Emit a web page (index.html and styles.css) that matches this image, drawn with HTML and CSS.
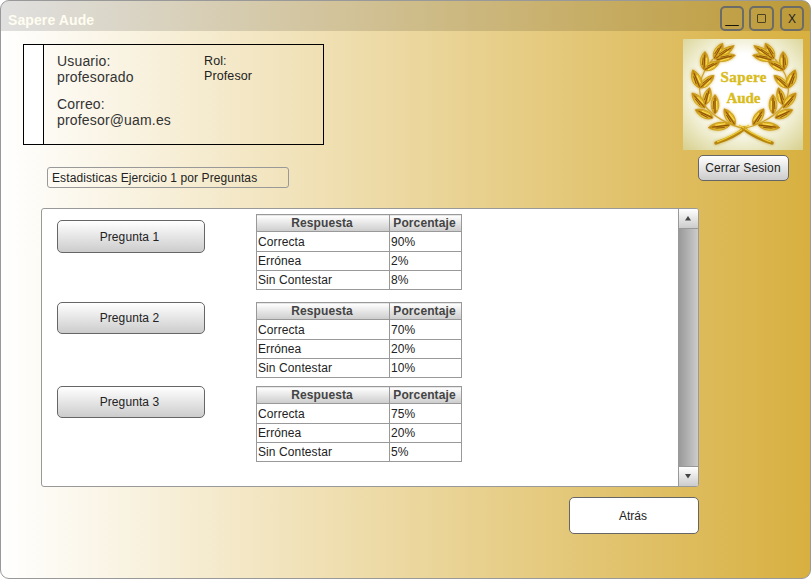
FILE: index.html
```
<!DOCTYPE html>
<html lang="es">
<head>
<meta charset="utf-8">
<title>Sapere Aude</title>
<link rel="stylesheet" href="styles.css">
</head>
<body>
<div class="window">
  <header class="titlebar">
    <h1>Sapere Aude</h1>
    <div class="controls">
      <button class="control minimize">__</button>
      <button class="control maximize"><span class="square"></span></button>
      <button class="control close">X</button>
    </div>
  </header>
  <div class="body">
    <main class="main">
      <section class="user-card">
        <div class="strip"></div>
        <div class="account">
          <p>Usuario:<br>profesorado</p>
          <p>Correo:<br>profesor@uam.es</p>
        </div>
        <p class="role">Rol:<br>Profesor</p>
      </section>
      <div class="caption">Estadisticas Ejercicio 1 por Preguntas</div>
      <section class="panel">
        <div class="questions">
          <div class="question first">
            <button class="btn">Pregunta 1</button>
            <table>
              <tr><th>Respuesta</th><th>Porcentaje</th></tr>
              <tr><td>Correcta</td><td>90%</td></tr>
              <tr><td>Errónea</td><td>2%</td></tr>
              <tr><td>Sin Contestar</td><td>8%</td></tr>
            </table>
          </div>
          <div class="question second">
            <button class="btn">Pregunta 2</button>
            <table>
              <tr><th>Respuesta</th><th>Porcentaje</th></tr>
              <tr><td>Correcta</td><td>70%</td></tr>
              <tr><td>Errónea</td><td>20%</td></tr>
              <tr><td>Sin Contestar</td><td>10%</td></tr>
            </table>
          </div>
          <div class="question">
            <button class="btn">Pregunta 3</button>
            <table>
              <tr><th>Respuesta</th><th>Porcentaje</th></tr>
              <tr><td>Correcta</td><td>75%</td></tr>
              <tr><td>Errónea</td><td>20%</td></tr>
              <tr><td>Sin Contestar</td><td>5%</td></tr>
            </table>
          </div>
        </div>
        <div class="scrollbar">
          <div class="arrow up"><svg width="6" height="5"><path d="M3 0L6 4.500H0z" fill="#444"/></svg></div>
          <div class="track"></div>
          <div class="arrow down"><svg width="6" height="5"><path d="M0 0H6L3 4.500z" fill="#444"/></svg></div>
        </div>
      </section>
      <button class="back">Atrás</button>
    </main>
    <aside class="side">
      <svg class="logo" width="120" height="111" viewBox="0 0 120 111">
        <defs>
          <radialGradient id="glow" cx=".5" cy=".46" r=".72">
            <stop offset=".45" stop-color="#fff"/>
            <stop offset=".7" stop-color="#edebca"/>
            <stop offset="1" stop-color="#d8d191"/>
          </radialGradient>
          <linearGradient id="gold">
            <stop offset="0" stop-color="#f3d545"/>
            <stop offset=".5" stop-color="#c08510"/>
            <stop offset="1" stop-color="#ecc634"/>
          </linearGradient>
          <filter id="soft" x="-20%" y="-20%" width="140%" height="140%"><feGaussianBlur stdDeviation="1.8"/></filter>
          <g id="leaf">
            <path d="M0 0C-6.500 -5 -5.500 -14 0 -19.500C5.500 -14 6.500 -5 0 0z" fill="url(#gold)" stroke="#c4930f" stroke-width=".8"/>
            <path d="M0 -1V-16M-2.200 -5L-1.600 -13" stroke="#7d4206" stroke-width=".8" fill="none"/>
            <path d="M2.200 -4L1.800 -13" stroke="#ffe65c" stroke-width="1.100"/>
          </g>
          <g id="branch">
            <path d="M33 104Q52 98 62 89" fill="none" stroke="#b7850e" stroke-width="3.400" stroke-linecap="round"/>
            <path d="M34 103Q50 97 66 86" fill="none" stroke="#edcc35" stroke-width="1.300"/>
            <path d="M62 90Q35 83 22 67Q8 46 30 20" fill="none" stroke="#d0a52a" stroke-width="1.200"/>
            <use href="#leaf" transform="translate(31 20) rotate(29) scale(.85 .92)"/>
            <use href="#leaf" transform="translate(32 20) rotate(55) scale(.75 1.2)"/>
            <use href="#leaf" transform="translate(33 21) rotate(76) scale(.75 1.02)"/>
            <use href="#leaf" transform="translate(21 31) rotate(3) scale(.9 .95)"/>
            <use href="#leaf" transform="translate(21 31) rotate(62) scale(.8 .9)"/>
            <use href="#leaf" transform="translate(17 49) rotate(-22) scale(.95 1)"/>
            <use href="#leaf" transform="translate(17 49) rotate(48) scale(.8 .97)"/>
            <use href="#leaf" transform="translate(22 69) rotate(-41) scale(.85 1.02)"/>
            <use href="#leaf" transform="translate(22 66) rotate(15) scale(.85 .92)"/>
            <use href="#leaf" transform="translate(30 79) rotate(-65) scale(.85 1)"/>
            <use href="#leaf" transform="translate(32 75) rotate(0) scale(.85 1)"/>
            <use href="#leaf" transform="translate(47 86) rotate(-97) scale(.85 1.12)"/>
            <use href="#leaf" transform="translate(52 86) rotate(-34) scale(.9 1)"/>
          </g>
        </defs>
        <rect width="120" height="111" fill="url(#glow)"/>
        <g filter="url(#soft)" opacity=".8">
          <use href="#branch"/>
          <use href="#branch" transform="translate(122 0) scale(-1 1)"/>
        </g>
        <use href="#branch"/>
        <use href="#branch" transform="translate(122 0) scale(-1 1)"/>
        <text x="60.500" y="43" textLength="46">Sapere</text>
        <text x="60.500" y="64" textLength="34">Aude</text>
      </svg>
      <button class="btn logout">Cerrar Sesion</button>
    </aside>
  </div>
</div>
</body>
</html>
```
FILE: styles.css
```
* { box-sizing: border-box; }

body {
  margin: 0;
  background: #fff;
  font: 12px/14px "Liberation Sans", Arial, sans-serif;
  color: #222;
}

button {
  font: inherit;
  color: inherit;
  padding: 0;
  margin: 0;
}

p { margin: 0; }

.window {
  width: 811px;
  height: 579px;
  border: 1px solid #999;
  border-radius: 9px;
  overflow: hidden;
  background: linear-gradient(90deg, #fff, #d8b040);
}

.titlebar {
  height: 30px;
  display: flex;
  justify-content: space-between;
  padding: 5px 6px 0;
  background: rgba(0, 0, 0, .12);
}

.titlebar h1 {
  margin: 6px 0 0 1px;
  font-size: 14px;
  line-height: 16px;
  letter-spacing: .1px;
  color: #fffdf0;
}

.controls { display: flex; gap: 5px; }

.control {
  width: 24px;
  height: 25px;
  border: 2px solid #6b6b68;
  border-radius: 5px;
  background: transparent;
  display: flex;
  align-items: center;
  justify-content: center;
}

.maximize { width: 25px; }
.close { margin-left: 1px; }
.minimize { color: #000; }

.square {
  width: 9px;
  height: 9px;
  border: 1px solid #4b431f;
  border-radius: 1px;
}

.body {
  display: flex;
  padding-left: 22px;
}

.main {
  width: 676px;
  padding-top: 13px;
  display: flex;
  flex-direction: column;
}

.user-card {
  width: 301px;
  height: 101px;
  border: 1px solid #000;
  display: flex;
  font-size: 14px;
  line-height: 16px;
  color: #333;
}

.strip {
  width: 20px;
  background: #fff;
  border-right: 1px solid #000;
}

.account {
  width: 147px;
  padding: 8px 0 0 13px;
  letter-spacing: .17px;
}

.account p + p { margin-top: 11px; }

.role {
  padding: 9px 0 0 13px;
  font-size: 12.5px;
  line-height: 15px;
  letter-spacing: .1px;
  color: #222;
}

.caption {
  width: 242px;
  height: 21px;
  margin: 22px 0 0 24px;
  border: 1px solid #999;
  border-radius: 3px;
  padding: 3px 4px;
  letter-spacing: .1px;
}

.panel {
  height: 279px;
  margin: 20px 0 0 18px;
  width: 658px;
  border: 1px solid #999;
  border-radius: 3px;
  background: #fff;
  display: flex;
  overflow: hidden;
}

.questions {
  flex: 1;
  padding: 5px 0 0 15px;
}

.question { display: flex; height: 84px; }
.question.first { height: 88px; }

.btn {
  border: 1px solid #666;
  border-radius: 5px;
  background: linear-gradient(#fff, #ccc);
  letter-spacing: .1px;
}

.question .btn {
  width: 148px;
  height: 32px;
  margin-right: 51px;
  padding-right: 3px;
}

.question.first .btn { height: 33px; margin-top: 6px; }

table {
  border-collapse: collapse;
  table-layout: fixed;
  width: 206px;
  height: 76px;
  letter-spacing: .1px;
}

th, td {
  border: 1px solid #999;
  height: 19px;
  padding: 0 1px;
  text-align: left;
}

tr:nth-child(2) td { height: 20px; padding-top: 1px; }

th {
  width: 72px;
  height: 17px;
  padding: 0 2px 0 0;
  line-height: 14px;
  text-align: center;
  color: #444;
  background: linear-gradient(#fff, #ccc);
}

th:first-child { width: 133px; }

.scrollbar {
  width: 20px;
  border-left: 1px solid #999;
  display: flex;
  flex-direction: column;
}

.arrow {
  height: 20px;
  display: flex;
  align-items: center;
  justify-content: center;
  padding-right: 1px;
  background: linear-gradient(#fff, #ccc);
}

.up { border-bottom: 1px solid #999; }
.down { border-top: 1px solid #999; }

.track {
  flex: 1;
  background: linear-gradient(90deg, #999, #ccc);
}

.back {
  width: 130px;
  height: 37px;
  margin-top: 10px;
  padding-right: 2px;
  align-self: flex-end;
  border: 1px solid #666;
  border-radius: 5px;
  background: #fff;
}

.side {
  width: 120px;
  margin-left: -16px;
  padding-top: 8px;
  display: flex;
  flex-direction: column;
  align-items: center;
}

.logo { display: block; }

.logo text {
  font: bold 15px "Liberation Serif", serif;
  text-anchor: middle;
  fill: #d9bc1d;
  stroke: #d9bc1d;
  stroke-width: .4px;
}

.logout {
  width: 91px;
  height: 26px;
  margin-top: 5px;
}
```
